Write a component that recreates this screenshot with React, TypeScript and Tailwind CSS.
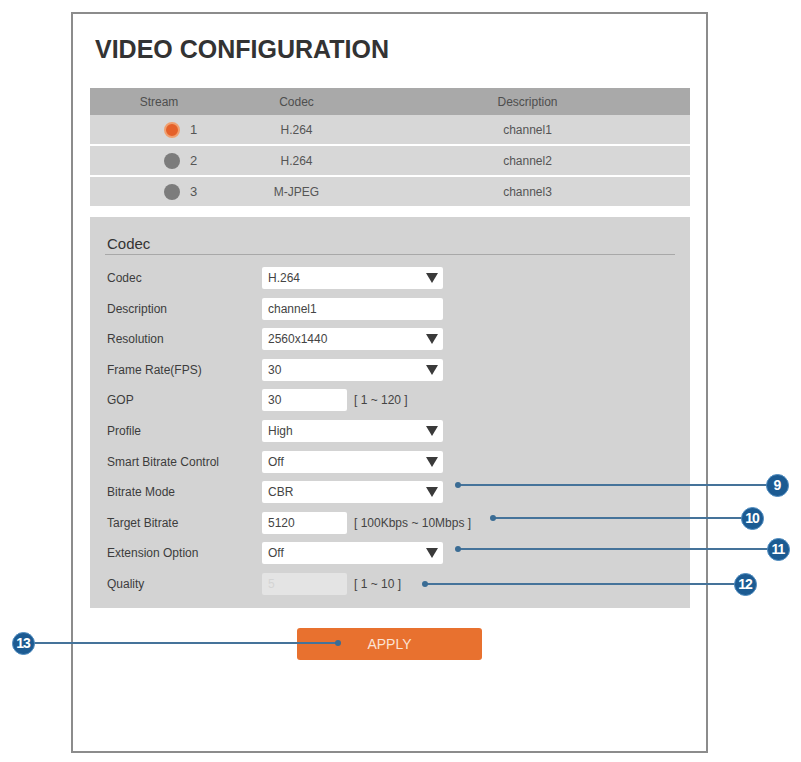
import React from "react";

const font = { fontFamily: '"Liberation Sans", Arial, sans-serif' };

function Arrow() {
  return (
    <svg width="12" height="10" viewBox="0 0 12 10" className="shrink-0">
      <polygon points="0,0 12,0 6,10" fill="#3a3a3a" />
    </svg>
  );
}

function Select({ value }: { value: string }) {
  return (
    <div className="flex h-[22px] w-[181px] items-center justify-between rounded-[2px] bg-white pl-[6px] pr-[5px] text-[12px] text-[#444]">
      <span>{value}</span>
      <Arrow />
    </div>
  );
}

function TextBox({ value, w, disabled }: { value: string; w: string; disabled?: boolean }) {
  return (
    <div
      className={`flex h-[22px] items-center rounded-[2px] pl-[6px] text-[12px] ${w} ${
        disabled ? "bg-[#e4e4e4] text-[#d4d4d4]" : "bg-white text-[#444]"
      }`}
    >
      {value}
    </div>
  );
}

type Row = { label: string; kind: "select" | "text" | "short" | "disabled"; value: string; range?: string };

const rows: Row[] = [
  { label: "Codec", kind: "select", value: "H.264" },
  { label: "Description", kind: "text", value: "channel1" },
  { label: "Resolution", kind: "select", value: "2560x1440" },
  { label: "Frame Rate(FPS)", kind: "select", value: "30" },
  { label: "GOP", kind: "short", value: "30", range: "[ 1 ~ 120 ]" },
  { label: "Profile", kind: "select", value: "High" },
  { label: "Smart Bitrate Control", kind: "select", value: "Off" },
  { label: "Bitrate Mode", kind: "select", value: "CBR" },
  { label: "Target Bitrate", kind: "short", value: "5120", range: "[ 100Kbps ~ 10Mbps ]" },
  { label: "Extension Option", kind: "select", value: "Off" },
  { label: "Quality", kind: "disabled", value: "5", range: "[ 1 ~ 10 ]" },
];

const streams = [
  { n: "1", codec: "H.264", desc: "channel1", active: true },
  { n: "2", codec: "H.264", desc: "channel2", active: false },
  { n: "3", codec: "M-JPEG", desc: "channel3", active: false },
];

function Badge({ n, x, y }: { n: string; x: number; y: number }) {
  return (
    <div
      className="absolute flex h-[23px] w-[23px] items-center justify-center rounded-full border-[1.5px] border-[#4f8cc0] bg-[#1c5b92] text-[14px] font-bold tracking-[-1px] text-white"
      style={{ left: x - 11.5, top: y - 11.5 }}
    >
      {n}
    </div>
  );
}

function Leader({ x1, x2, y }: { x1: number; x2: number; y: number }) {
  return (
    <>
      <div className="absolute h-[2px] bg-[#45739a]" style={{ left: x1, width: x2 - x1, top: y - 1 }} />
      <div className="absolute h-[6px] w-[6px] rounded-full bg-[#3a6c94]" style={{ left: x1 - 3, top: y - 3 }} />
    </>
  );
}

export default function App() {
  return (
    <div className="relative h-[762px] w-[801px] overflow-hidden bg-white" style={font}>
      <div className="ml-[71px] mt-[12px] h-[741px] w-[637px] border-2 border-[#8c8c8c] bg-white pl-[17px]">
        <h1 className="ml-[5px] mt-[20px] h-[30px] text-[25px] font-bold leading-[30px] text-[#333]">
          VIDEO CONFIGURATION
        </h1>

        {/* stream table */}
        <div className="mt-[24px] w-[600px] text-[12px] text-[#555]">
          <div className="grid h-[27px] grid-cols-[138px_137px_325px] items-center bg-[#a9a9a9] text-[#4e4e4e]">
            <div className="text-center">Stream</div>
            <div className="text-center">Codec</div>
            <div className="text-center">Description</div>
          </div>
          <div className="flex flex-col gap-[2px]">
            {streams.map((s) => (
              <div key={s.n} className="grid h-[29px] grid-cols-[138px_137px_325px] items-center bg-[#d7d7d7]">
                <div className="flex items-center pl-[74px]">
                  <span
                    className={`h-[16px] w-[16px] rounded-full ${
                      s.active ? "border-2 border-[#f0a070] bg-[#e5612a]" : "bg-[#7c7c7c]"
                    }`}
                  />
                  <span className="ml-[10px] text-[13px]">{s.n}</span>
                </div>
                <div className="text-center">{s.codec}</div>
                <div className="text-center">{s.desc}</div>
              </div>
            ))}
          </div>
        </div>

        {/* codec panel */}
        <div className="mt-[11px] h-[391px] w-[600px] bg-[#d3d3d3] px-[15px] pt-[18px]">
          <div className="border-b border-[#a8a8a8] pb-[1px] pl-[2px] text-[15px] leading-[18px] text-[#333]">
            Codec
          </div>
          <div className="mt-[12px] flex flex-col gap-[8.6px]">
            {rows.map((r) => (
              <div key={r.label} className="flex h-[22px] items-center">
                <div className="w-[157px] pl-[2px] text-[12px] text-[#3c3c3c]">{r.label}</div>
                {r.kind === "select" && <Select value={r.value} />}
                {r.kind === "text" && <TextBox value={r.value} w="w-[181px]" />}
                {r.kind === "short" && <TextBox value={r.value} w="w-[85px]" />}
                {r.kind === "disabled" && <TextBox value={r.value} w="w-[85px]" disabled />}
                {r.range && <span className="ml-[7px] text-[12px] text-[#444]">{r.range}</span>}
              </div>
            ))}
          </div>
        </div>

        {/* apply */}
        <div className="ml-[207px] mt-[20px] flex h-[32px] w-[185px] items-center justify-center rounded-[3px] bg-[#e8712f] text-[14px] text-[#fbe3d4]">
          APPLY
        </div>
      </div>

      {/* callouts */}
      <Leader x1={458} x2={770} y={485} />
      <Badge n="9" x={777} y={485} />
      <Leader x1={493} x2={745} y={518} />
      <Badge n="10" x={752} y={518} />
      <Leader x1={458} x2={770} y={549} />
      <Badge n="11" x={778} y={549} />
      <Leader x1={425} x2={738} y={584} />
      <Badge n="12" x={745} y={584} />
      <div className="absolute h-[2px] bg-[#45739a]" style={{ left: 23, width: 315, top: 642 }} />
      <div className="absolute h-[6px] w-[6px] rounded-full bg-[#3a6c94]" style={{ left: 335, top: 640 }} />
      <Badge n="13" x={23} y={643} />
    </div>
  );
}
